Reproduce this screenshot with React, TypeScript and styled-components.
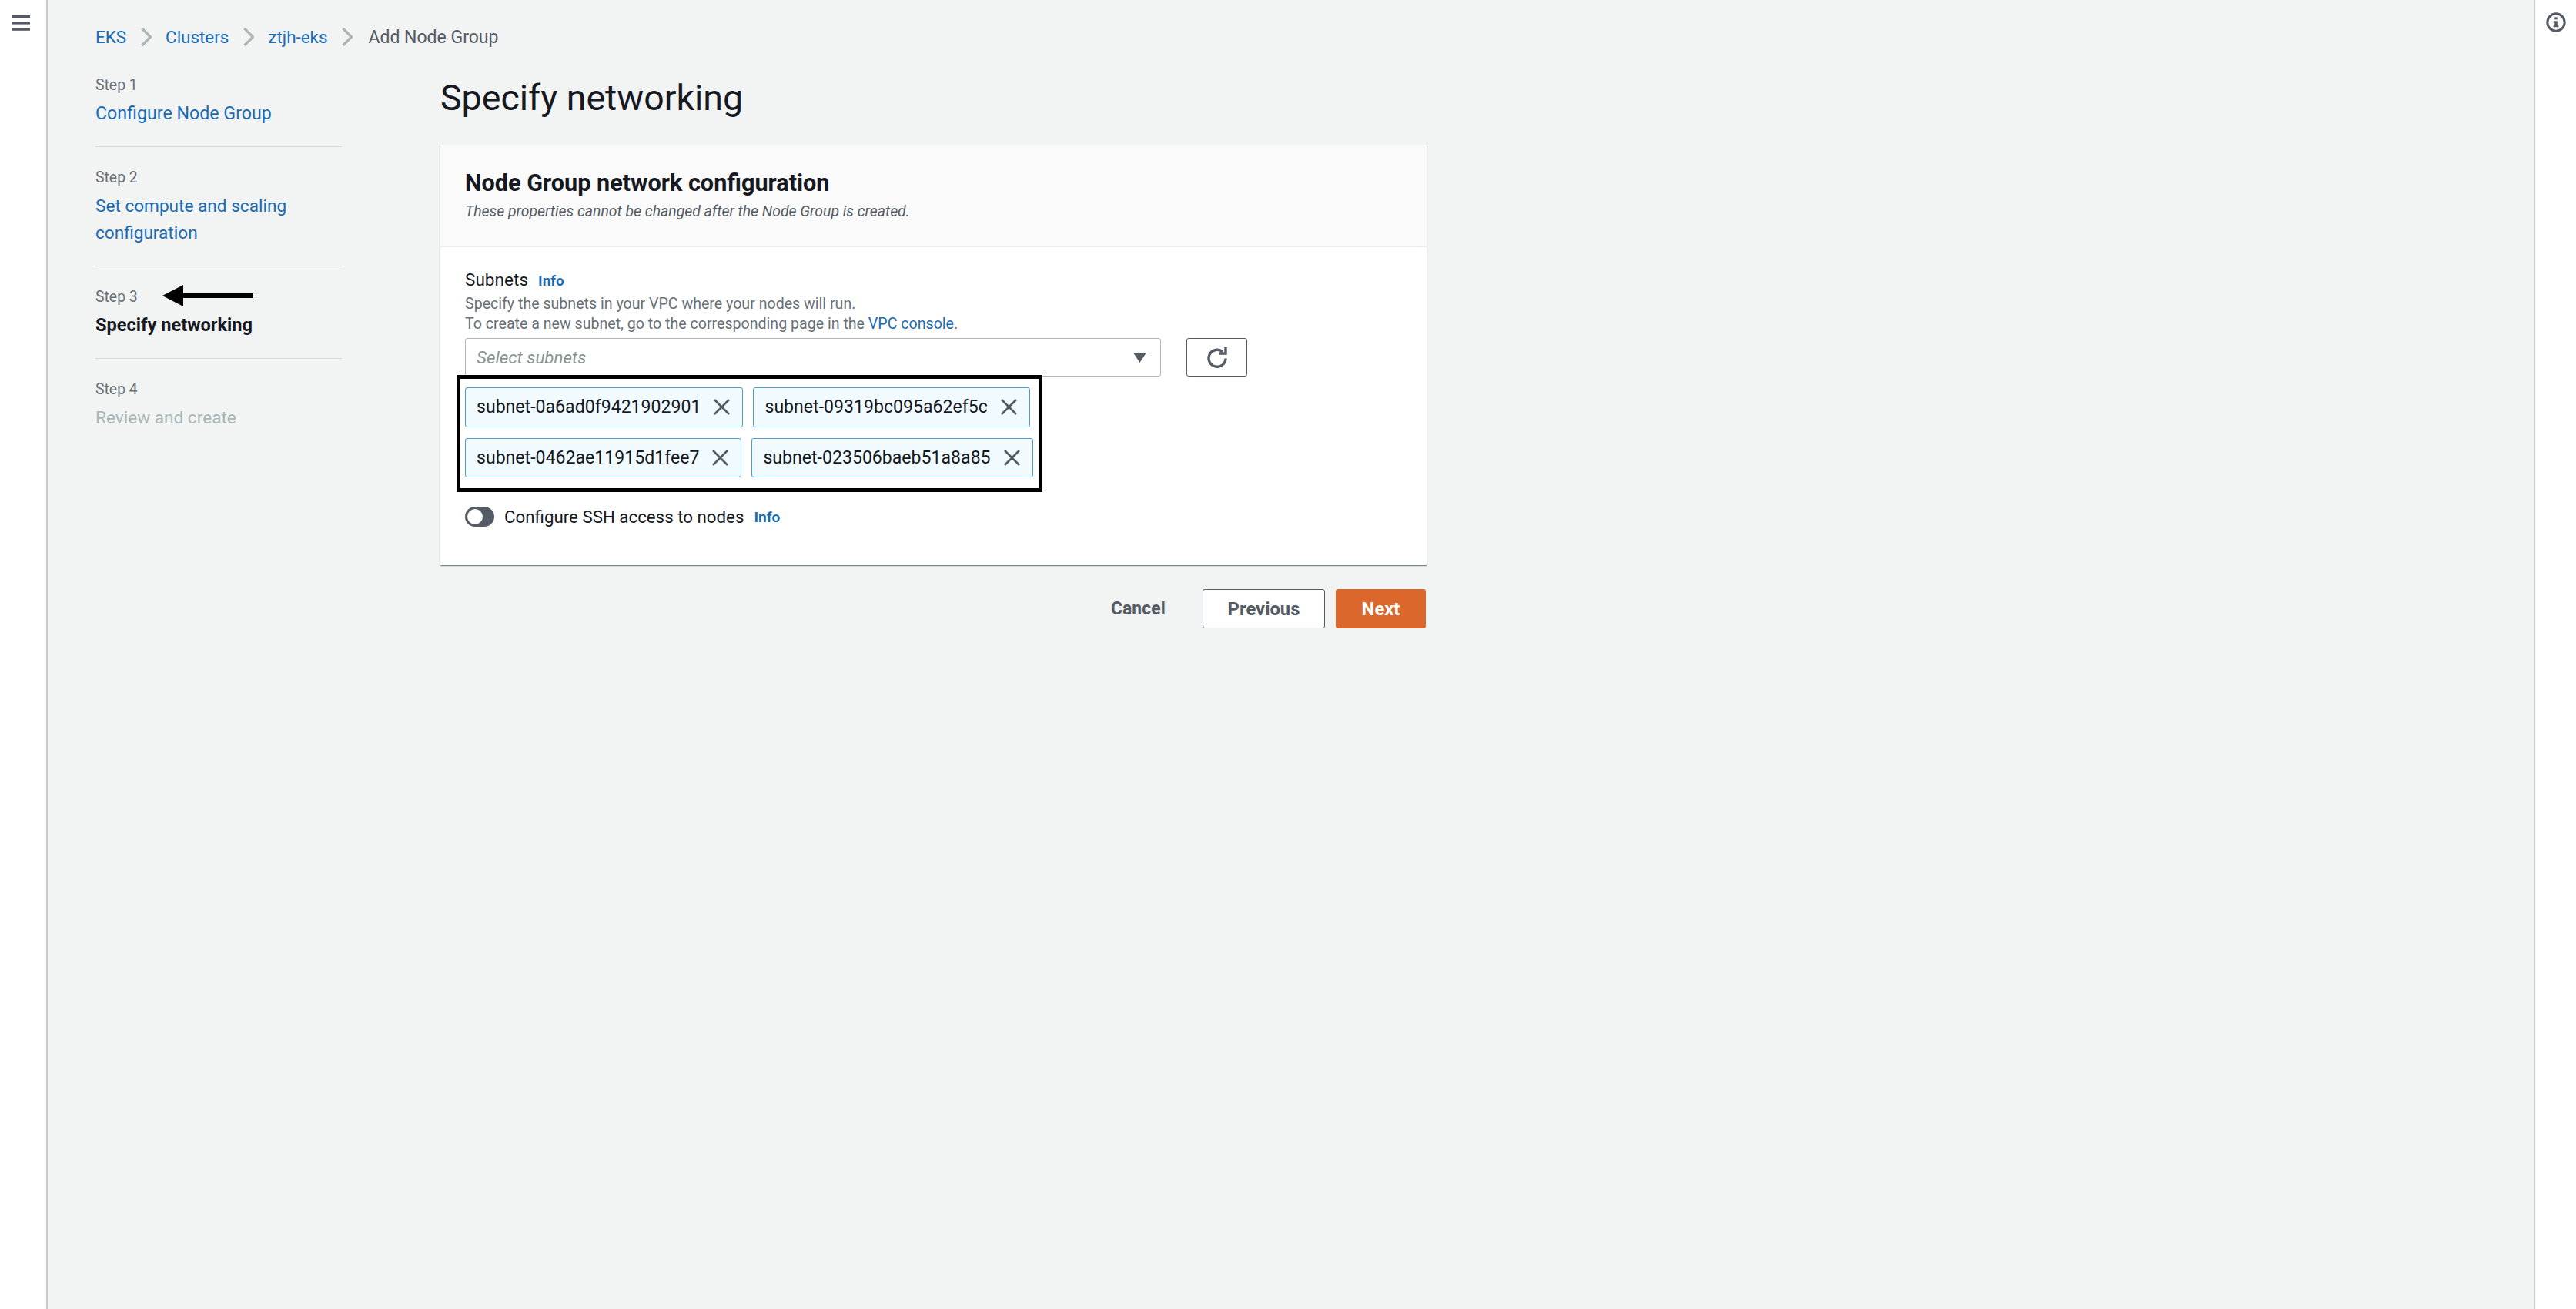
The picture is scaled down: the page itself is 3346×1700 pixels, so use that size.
import React from 'react';
import styled, { createGlobalStyle } from 'styled-components';

const GlobalStyle = createGlobalStyle`
  html, body {
    margin: 0;
    padding: 0;
    height: 100%;
  }
  body {
    font-family: Roboto, "Liberation Sans", sans-serif;
    color: #16191f;
    background: #f2f3f3;
  }
  * {
    box-sizing: border-box;
  }
`;

const Shell = styled.div`
  display: flex;
  width: 3346px;
  height: 1700px;
  overflow: hidden;
  background: #f2f3f3;
`;

const Rail = styled.aside<{ $side: 'left' | 'right' }>`
  flex: none;
  display: flex;
  justify-content: center;
  background: #fff;
  width: ${(p) => (p.$side === 'left' ? '62px' : '55px')};
  padding-top: ${(p) => (p.$side === 'left' ? '20px' : '16px')};
  padding-right: ${(p) => (p.$side === 'left' ? '6px' : '0')};
  border-${(p) => (p.$side === 'left' ? 'right' : 'left')}: 2px solid #c6cbcc;
`;

const Main = styled.main`
  flex: 1;
  min-width: 0;
  padding: 30px 0 0 62px;
`;

const Crumbs = styled.nav`
  display: flex;
  align-items: center;
  height: 36px;
  font-size: 22.4px;
`;

const CrumbLink = styled.a`
  color: #1a6cb4;
`;

const CrumbCurrent = styled.span`
  margin-left: 2px;
  font-size: 23px;
  color: #545b64;
`;

const Chevron = styled.svg`
  flex: none;
  width: 14px;
  height: 24px;
  margin: 0 18.5px;
`;

const Columns = styled.div`
  display: flex;
  gap: 128px;
  padding-top: 30px;
`;

const Steps = styled.ol`
  flex: none;
  width: 320px;
  margin: 0;
  padding: 0;
  list-style: none;
`;

const StepItem = styled.li`
  position: relative;
  padding: 25.5px 0 24.5px;
  border-bottom: 1.5px solid #d5dbdb;

  &:first-child {
    padding-top: 0;
  }
  &:last-child {
    border-bottom: 0;
  }
`;

const StepLabel = styled.div`
  height: 30px;
  margin-bottom: 4px;
  line-height: 30px;
  font-size: 19.4px;
  color: #687078;
`;

const StepTitle = styled.div<{ $state: 'link' | 'current' | 'disabled'; $size?: number }>`
  font-size: ${(p) => p.$size ?? 22.6}px;
  line-height: 35px;
  font-weight: ${(p) => (p.$state === 'current' ? 700 : 400)};
  color: ${(p) =>
    p.$state === 'link' ? '#1a6cb4' : p.$state === 'current' ? '#16191f' : '#aab7b8'};
`;

const StepArrow = styled.svg`
  position: absolute;
  left: 87px;
  top: 23px;
  width: 118px;
  height: 30px;
`;

const Content = styled.section`
  width: 1281px;
`;

const PageTitle = styled.h1`
  margin: 0 0 28px;
  height: 64px;
  font-size: 46.5px;
  line-height: 62px;
  font-weight: 400;
  color: #16191f;
`;

const Card = styled.div`
  background: #fff;
  box-shadow: 0 1px 1px 0 rgba(0, 28, 36, 0.3), 1px 1px 1px 0 rgba(0, 28, 36, 0.15),
    -1px 1px 1px 0 rgba(0, 28, 36, 0.15);
`;

const CardHeader = styled.header`
  height: 133px;
  padding: 31px 32px 0;
  background: #fafafa;
  border-bottom: 1px solid #eaeded;
`;

const CardTitle = styled.h2`
  margin: 0;
  font-size: 30.6px;
  line-height: 38px;
  font-weight: 700;
`;

const CardSubtitle = styled.p`
  margin: 0;
  padding-top: 2px;
  font-size: 19.4px;
  line-height: 32px;
  font-style: italic;
  color: #545b64;
`;

const CardBody = styled.div`
  height: 413px;
  padding: 26px 32px 0;
`;

const FieldLabel = styled.div`
  display: flex;
  align-items: baseline;
  gap: 13px;
  height: 35px;
  font-size: 22.6px;
  line-height: 34px;
`;

const InfoLink = styled.a`
  font-size: 19px;
  font-weight: 700;
  color: #1a6cb4;
`;

const Hint = styled.div`
  font-size: 19.6px;
  line-height: 26px;
  color: #687078;
`;

const HintLink = styled.a`
  color: #1a6cb4;
`;

const SelectRow = styled.div`
  display: flex;
  gap: 33px;
  margin-top: 5px;
`;

const Select = styled.div`
  display: flex;
  align-items: center;
  justify-content: space-between;
  width: 904px;
  height: 50px;
  padding: 0 18px 0 14px;
  background: #fff;
  border: 1.5px solid #aab7b8;
  border-radius: 3px;
  font-size: 22.4px;
  font-style: italic;
  color: #879596;
`;

const Caret = styled.svg`
  width: 17px;
  height: 13px;
`;

const IconButton = styled.button`
  display: flex;
  align-items: center;
  justify-content: center;
  width: 79px;
  height: 50px;
  padding: 0;
  background: #fff;
  border: 1.5px solid #545b64;
  border-radius: 3px;
`;

const ChipArea = styled.div`
  position: relative;
  display: flex;
  flex-wrap: wrap;
  gap: 14px 13px;
  width: 745px;
  margin-top: 14px;
`;

const Chip = styled.div`
  display: flex;
  align-items: center;
  gap: 17px;
  height: 51.5px;
  padding: 0 16px 0 14px;
  background: #f1faff;
  border: 1.5px solid #4a9fce;
  border-radius: 3px;
  font-size: 23.1px;
  color: #16191f;
`;

const ChipClose = styled.svg`
  flex: none;
  width: 21px;
  height: 21px;
`;

const Highlight = styled.div`
  position: absolute;
  left: -11px;
  top: -16px;
  width: 761px;
  height: 152px;
  border: 5px solid #000;
  pointer-events: none;
`;

const ToggleRow = styled.div`
  display: flex;
  align-items: center;
  height: 26px;
  margin-top: 38px;
  font-size: 22.3px;
`;

const ToggleTrack = styled.span`
  display: block;
  flex: none;
  position: relative;
  width: 38px;
  height: 26px;
  margin-right: 13px;
  border-radius: 13px;
  background: #545b64;
`;

const ToggleKnob = styled.span`
  position: absolute;
  left: 3px;
  top: 3px;
  width: 20px;
  height: 20px;
  border-radius: 50%;
  background: #fff;
`;

const ToggleInfo = styled(InfoLink)`
  margin-left: 13px;
`;

const Actions = styled.div`
  display: flex;
  align-items: center;
  justify-content: flex-end;
  margin-top: 31px;
  padding-right: 1px;
`;

const CancelButton = styled.button`
  width: 70px;
  margin-right: 49px;
  padding: 0;
  background: none;
  border: 0;
  font: 700 23px Roboto, sans-serif;
  color: #545b64;
  white-space: nowrap;
`;

const PreviousButton = styled.button`
  width: 159px;
  height: 51px;
  margin-right: 14px;
  padding: 0;
  background: #fff;
  border: 1.5px solid #545b64;
  border-radius: 3px;
  font: 700 23.8px Roboto, sans-serif;
  color: #545b64;
`;

const NextButton = styled.button`
  width: 117px;
  height: 51px;
  padding: 0;
  background: #dc672c;
  border: 0;
  border-radius: 3px;
  font: 700 23.8px Roboto, sans-serif;
  color: #fff;
`;

const subnets = [
  'subnet-0a6ad0f9421902901',
  'subnet-09319bc095a62ef5c',
  'subnet-0462ae11915d1fee7',
  'subnet-023506baeb51a8a85',
];

const crumbs = ['EKS', 'Clusters', 'ztjh-eks'];

const HamburgerIcon = () => (
  <svg width="23" height="20" viewBox="0 0 23 20" fill="#545b64">
    <rect y="0" width="23" height="3.4" />
    <rect y="8.2" width="23" height="3.4" />
    <rect y="16.4" width="23" height="3.4" />
  </svg>
);

const InfoIcon = () => (
  <svg width="26" height="26" viewBox="0 0 26 26" fill="none">
    <circle cx="13" cy="13" r="11.2" stroke="#545b64" strokeWidth="3" />
    <rect x="11.2" y="6.4" width="3.6" height="3" fill="#545b64" />
    <path d="M9.8 11.2h5v5.2h1.6v2.8H9.6v-2.8h1.6v-2.6H9.8z" fill="#545b64" />
  </svg>
);

const RefreshIcon = () => (
  <svg width="28" height="27" viewBox="0 0 28 27" fill="none" stroke="#545b64" strokeWidth="3.4">
    <path d="M25 14.5a11 11 0 1 1-4-8.7" />
    <path d="M25 0v8h-8" />
  </svg>
);

const ChevronIcon = () => (
  <Chevron viewBox="0 0 14 24" fill="none" stroke="#aab7b8" strokeWidth="3.4">
    <path d="M1.5 1l11 11-11 11" />
  </Chevron>
);

const CloseIcon = () => (
  <ChipClose viewBox="0 0 21 21" fill="none" stroke="#545b64" strokeWidth="2.6">
    <path d="M1 1l19 19M20 1L1 20" />
  </ChipClose>
);

const App = () => {
  return (
    <Shell>
      <GlobalStyle />
      <Rail $side='left'>
        <HamburgerIcon />
      </Rail>
      <Main>
        <Crumbs>
          {crumbs.map((c) => (
            <React.Fragment key={c}>
              <CrumbLink>{c}</CrumbLink>
              <ChevronIcon />
            </React.Fragment>
          ))}
          <CrumbCurrent>Add Node Group</CrumbCurrent>
        </Crumbs>
        <Columns>
          <Steps>
            <StepItem>
              <StepLabel>Step 1</StepLabel>
              <StepTitle $state='link' $size={23.2}>Configure Node Group</StepTitle>
            </StepItem>
            <StepItem>
              <StepLabel>Step 2</StepLabel>
              <StepTitle $state='link'>Set compute and scaling configuration</StepTitle>
            </StepItem>
            <StepItem>
              <StepLabel>Step 3</StepLabel>
              <StepArrow viewBox="0 0 118 30">
                <path d="M0 15L27 1v11h91v6H27v11z" fill="#000" />
              </StepArrow>
              <StepTitle $state='current' $size={23.6}>Specify networking</StepTitle>
            </StepItem>
            <StepItem>
              <StepLabel>Step 4</StepLabel>
              <StepTitle $state='disabled'>Review and create</StepTitle>
            </StepItem>
          </Steps>
          <Content>
            <PageTitle>Specify networking</PageTitle>
            <Card>
              <CardHeader>
                <CardTitle>Node Group network configuration</CardTitle>
                <CardSubtitle>These properties cannot be changed after the Node Group is created.</CardSubtitle>
              </CardHeader>
              <CardBody>
                <FieldLabel>
                  Subnets <InfoLink>Info</InfoLink>
                </FieldLabel>
                <Hint>
                  Specify the subnets in your VPC where your nodes will run.
                  <br />
                  To create a new subnet, go to the corresponding page in the <HintLink>VPC console</HintLink>.
                </Hint>
                <SelectRow>
                  <Select>
                    Select subnets
                    <Caret viewBox="0 0 17 13">
                      <path d="M0 0h17L8.5 13z" fill="#545b64" />
                    </Caret>
                  </Select>
                  <IconButton>
                    <RefreshIcon />
                  </IconButton>
                </SelectRow>
                <ChipArea>
                  {subnets.map((s) => (
                    <Chip key={s}>
                      {s}
                      <CloseIcon />
                    </Chip>
                  ))}
                  <Highlight />
                </ChipArea>
                <ToggleRow>
                  <ToggleTrack>
                    <ToggleKnob />
                  </ToggleTrack>
                  Configure SSH access to nodes
                  <ToggleInfo>Info</ToggleInfo>
                </ToggleRow>
              </CardBody>
            </Card>
            <Actions>
              <CancelButton>Cancel</CancelButton>
              <PreviousButton>Previous</PreviousButton>
              <NextButton>Next</NextButton>
            </Actions>
          </Content>
        </Columns>
      </Main>
      <Rail $side='right'>
        <InfoIcon />
      </Rail>
    </Shell>
  );
};

export default App;
